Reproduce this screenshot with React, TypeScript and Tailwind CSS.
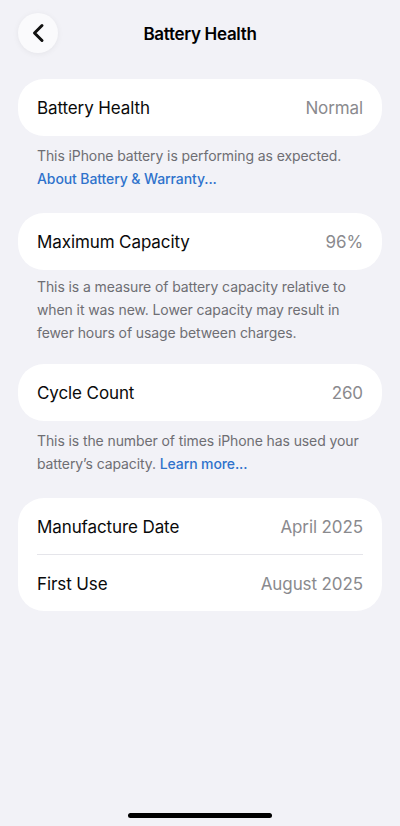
import React from 'react';

const font = { fontFamily: 'Inter, "Noto Sans", sans-serif' };

interface RowProps {
  label: string;
  value: string;
  tall?: boolean;
}

const Row: React.FC<RowProps> = ({ label, value, tall }) => (
  <div className={`flex items-center justify-between pt-[3px] ${tall ? 'h-[57px]' : 'h-[56px]'}`}>
    <span className="text-[17px] tracking-[-0.1px] text-[#0a0a0a]">{label}</span>
    <span className="text-[17px] tracking-[-0.1px] text-[#8a8a8e]">{value}</span>
  </div>
);

const Card: React.FC<{ children: React.ReactNode }> = ({ children }) => (
  <div className="rounded-[26px] bg-white px-[19px]">{children}</div>
);

const Footer: React.FC<{ children: React.ReactNode; tight?: boolean }> = ({ children, tight }) => (
  <p
    className={`px-[19px] text-[14px] leading-[23px] tracking-[-0.1px] text-[#6e6e73] ${
      tight ? 'pt-[5px] pb-[20px]' : 'pt-[8px] pb-[23px]'
    }`}
  >
    {children}
  </p>
);

export default function App() {
  return (
    <div className="relative flex min-h-[826px] w-full flex-col bg-[#f2f2f7]" style={font}>
      {/* Nav bar */}
      <div className="relative mt-[13px] flex h-[40px] items-center justify-center px-[18px]">
        <button className="absolute left-[18px] top-0 flex h-[40px] w-[40px] items-center justify-center rounded-full bg-[#fafafc] shadow-[0_1px_6px_rgba(0,0,0,0.06)]">
          <svg width="14" height="20" viewBox="0 0 14 20" fill="none">
            <path d="M11 2.5 L3.5 10 L11 17.5" stroke="#111" strokeWidth="3" strokeLinecap="round" strokeLinejoin="round" />
          </svg>
        </button>
        <h1 className="pt-[3px] text-[17px] font-semibold tracking-[-0.3px] text-black">Battery Health</h1>
      </div>

      <div className="mt-[26px] px-[18px]">
        <Card>
          <Row label="Battery Health" value="Normal" tall />
        </Card>
        <Footer>
          This iPhone battery is performing as expected.
          <br />
          <span className="font-medium text-[#2f72cc]">About Battery &amp; Warranty...</span>
        </Footer>

        <Card>
          <Row label="Maximum Capacity" value="96%" tall />
        </Card>
        <Footer tight>
          This is a measure of battery capacity relative to when it was new. Lower capacity may result in fewer hours of usage between charges.
        </Footer>

        <Card>
          <Row label="Cycle Count" value="260" tall />
        </Card>
        <Footer>
          This is the number of times iPhone has used your battery’s capacity.{' '}
          <span className="font-medium text-[#2f72cc]">Learn more...</span>
        </Footer>

        <Card>
          <Row label="Manufacture Date" value="April 2025" />
          <div className="h-px bg-[#e5e5ea]" />
          <Row label="First Use" value="August 2025" />
        </Card>
      </div>

      <div className="absolute bottom-[8px] left-1/2 h-[5px] w-[144px] -translate-x-1/2 rounded-full bg-black" />
    </div>
  );
}
